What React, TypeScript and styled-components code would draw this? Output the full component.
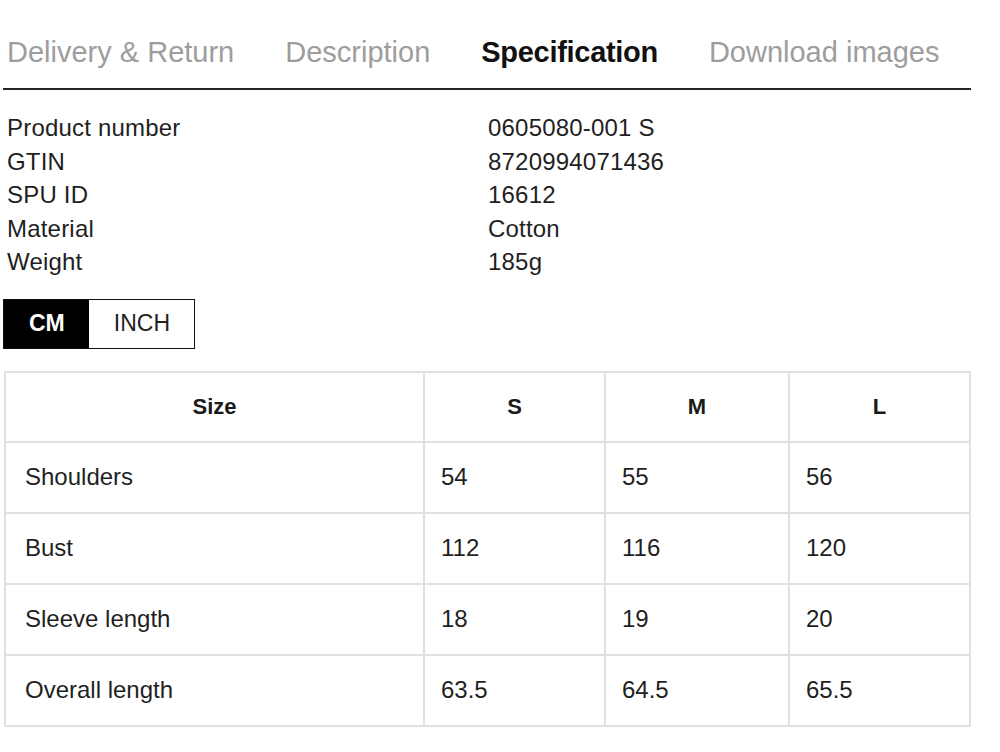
import React, { useState } from "react";
import styled, { createGlobalStyle } from "styled-components";

const GlobalStyle = createGlobalStyle`
  body {
    margin: 0;
    background: #fff;
    font-family: "Liberation Sans", Arial, sans-serif;
    color: #1c1c1c;
  }
`;

const tabs = ["Delivery & Return", "Description", "Specification", "Download images"];

const specs: [string, string][] = [
  ["Product number", "0605080-001 S"],
  ["GTIN", "8720994071436"],
  ["SPU ID", "16612"],
  ["Material", "Cotton"],
  ["Weight", "185g"],
];

const sizes = ["S", "M", "L"];

const measurements: { label: string; values: string[] }[] = [
  { label: "Shoulders", values: ["54", "55", "56"] },
  { label: "Bust", values: ["112", "116", "120"] },
  { label: "Sleeve length", values: ["18", "19", "20"] },
  { label: "Overall length", values: ["63.5", "64.5", "65.5"] },
];

const App: React.FC = () => {
  const [unit, setUnit] = useState<"CM" | "INCH">("CM");

  return (
    <>
      <GlobalStyle />
      <Page>
        <TabBar>
          {tabs.map((tab) => (
            <Tab key={tab} active={tab === "Specification"}>
              {tab}
            </Tab>
          ))}
        </TabBar>

        <SpecList>
          {specs.map(([label, value]) => (
            <React.Fragment key={label}>
              <SpecLabel>{label}</SpecLabel>
              <SpecValue>{value}</SpecValue>
            </React.Fragment>
          ))}
        </SpecList>

        <UnitToggle>
          <UnitButton selected={unit === "CM"} onClick={() => setUnit("CM")}>
            CM
          </UnitButton>
          <UnitButton selected={unit === "INCH"} onClick={() => setUnit("INCH")}>
            INCH
          </UnitButton>
        </UnitToggle>

        <SizeTable>
          <colgroup>
            <col style={{ width: 419 }} />
            <col style={{ width: 181 }} />
            <col style={{ width: 184 }} />
            <col />
          </colgroup>
          <thead>
            <tr>
              <HeadCell>Size</HeadCell>
              {sizes.map((s) => (
                <HeadCell key={s}>{s}</HeadCell>
              ))}
            </tr>
          </thead>
          <tbody>
            {measurements.map((row) => (
              <tr key={row.label}>
                <BodyCell>{row.label}</BodyCell>
                {row.values.map((v, i) => (
                  <BodyCell key={i}>{v}</BodyCell>
                ))}
              </tr>
            ))}
          </tbody>
        </SizeTable>
      </Page>
    </>
  );
};

const Page = styled.div`
  width: 968px;
  margin-left: 3px;
  display: flex;
  flex-direction: column;
`;

const TabBar = styled.div`
  display: flex;
  gap: 51px;
  padding: 35px 0 19px 4px;
  border-bottom: 2px solid #262626;
`;

const Tab = styled.div<{ active?: boolean }>`
  font-size: 29px;
  line-height: 34px;
  color: ${(p) => (p.active ? "#111" : "#9d9d9d")};
  font-weight: ${(p) => (p.active ? 700 : 400)};
  letter-spacing: ${(p) => (p.active ? "-0.3px" : "0")};
  white-space: nowrap;
`;

const SpecList = styled.div`
  display: grid;
  grid-template-columns: 481px 1fr;
  margin-top: 21px;
  padding-left: 4px;
  font-size: 24px;
  line-height: 33.5px;
  color: #1f1f1f;
  letter-spacing: 0.2px;
`;

const SpecLabel = styled.div``;

const SpecValue = styled.div``;

const UnitToggle = styled.div`
  display: flex;
  align-self: flex-start;
  margin-top: 20px;
  height: 50px;
  border: 1.5px solid #111;
  box-sizing: border-box;
`;

const UnitButton = styled.button<{ selected?: boolean }>`
  border: none;
  margin: 0;
  padding: 0 24px 0 25px;
  font-family: inherit;
  font-size: 23px;
  font-weight: ${(p) => (p.selected ? 700 : 400)};
  color: ${(p) => (p.selected ? "#fff" : "#222")};
  background: ${(p) => (p.selected ? "#000" : "#fff")};
  cursor: pointer;
`;

const SizeTable = styled.table`
  margin-top: 22px;
  margin-left: 1px;
  width: 967px;
  table-layout: fixed;
  border-collapse: collapse;
  border: 2px solid #e0e0e0;
`;

const HeadCell = styled.th`
  height: 68px;
  border: 2px solid #e0e0e0;
  font-size: 22px;
  font-weight: 700;
  color: #1a1a1a;
  text-align: center;
  padding: 0;
`;

const BodyCell = styled.td`
  height: 69px;
  border: 2px solid #e0e0e0;
  font-size: 24px;
  color: #1f1f1f;
  padding: 0 0 0 16px;
  &:first-child {
    padding-left: 19px;
  }
`;

export default App;
